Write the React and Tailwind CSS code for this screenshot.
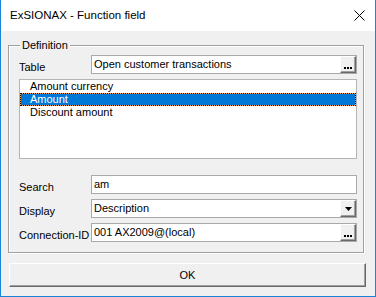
const Dots = () => (
  <div className="w-[16px] h-full bg-[#f0f0f0] border-t border-l border-t-white border-l-white border-r border-b border-r-[#696969] border-b-[#696969] shadow-[inset_-1px_-1px_0_#a0a0a0] flex items-end justify-center pb-[3px] shrink-0">
    <svg width="8" height="2" viewBox="0 0 8 2">
      <rect x="0" y="0" width="2" height="2" fill="#000" />
      <rect x="3" y="0" width="2" height="2" fill="#000" />
      <rect x="6" y="0" width="2" height="2" fill="#000" />
    </svg>
  </div>
);

const Arrow = () => (
  <div className="w-[16px] h-full bg-[#f0f0f0] border-t border-l border-t-white border-l-white border-r border-b border-r-[#696969] border-b-[#696969] shadow-[inset_-1px_-1px_0_#a0a0a0] flex items-center justify-center shrink-0">
    <svg width="7" height="4" viewBox="0 0 7 4">
      <path d="M0 0 H7 L3.5 4 Z" fill="#000" />
    </svg>
  </div>
);

function Row({ label, value, right, className = "" }) {
  return (
    <div className={"flex items-start " + className}>
      <div className="w-[72px] pt-[6px] shrink-0 whitespace-nowrap">{label}</div>
      <div className="flex-1 h-[19px] bg-white border border-[#a9a9a9] flex items-stretch">
        <div className="flex-1 pl-[2px] flex items-center whitespace-nowrap overflow-hidden">{value}</div>
        {right}
      </div>
    </div>
  );
}

export default function App() {
  return (
    <div className="w-[376px] h-[297px] bg-[#f0f0f0] border-x border-b border-[#1883d7] flex flex-col font-['Liberation_Sans',Arial,sans-serif] text-[11px] leading-[13px] text-black overflow-hidden">
      <div className="h-[31px] bg-white flex items-center justify-between pl-[9px] pr-[10px] shrink-0">
        <span className="text-[11.5px]">ExSIONAX - Function field</span>
        <svg width="11" height="11" viewBox="0 0 11 11">
          <path d="M0.5 0.5 L10.5 10.5 M10.5 0.5 L0.5 10.5" stroke="#000" strokeWidth="1" />
        </svg>
      </div>
      <div className="flex flex-col pl-[7px]">
        <div className="mt-[14px] w-[356px] h-[208px] border border-[#a0a0a0] shadow-[1px_1px_0_#fff,inset_1px_1px_0_#fff] flex flex-col pl-[10px] pr-[6px]">
          <div className="-mt-[7px] ml-[1px] w-fit px-[2px] bg-[#f0f0f0]">Definition</div>
          <Row className="mt-[3px]" label="Table" value="Open customer transactions" right={<Dots />} />
          <div className="mt-[5px] h-[80px] bg-white border border-[#b4b4b4] flex flex-col">
            <div className="h-[13px] pl-[10px]">Amount currency</div>
            <div className="h-[13px] pl-[10px] bg-[#0078d7] text-white outline outline-1 outline-dotted outline-black -outline-offset-1 shadow-[inset_0_0_0_1px_#ffa040]">Amount</div>
            <div className="h-[13px] pl-[10px]">Discount amount</div>
          </div>
          <Row className="mt-[16px]" label="Search" value="am" right={null} />
          <Row className="mt-[5px]" label="Display" value="Description" right={<Arrow />} />
          <Row className="mt-[5px]" label="Connection-ID" value="001 AX2009@(local)" right={<Dots />} />
        </div>
        <button className="mt-[10px] ml-[1px] w-[357px] h-[24px] bg-[#f0f0f0] border-t border-l border-t-white border-l-white border-r border-b border-r-[#696969] border-b-[#696969] shadow-[inset_-1px_-1px_0_#a0a0a0] flex items-center justify-center">
          OK
        </button>
      </div>
    </div>
  );
}
